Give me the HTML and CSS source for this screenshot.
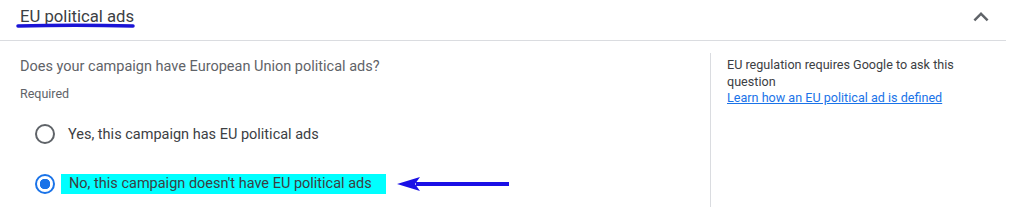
FILE: index.html
```html
<!DOCTYPE html>
<html lang="en">
<head>
    <meta charset="UTF-8">
    <title>EU political ads</title>
    <link rel="stylesheet" href="styles.css">
</head>
<body>
    <div class="panel">
        <div class="panel-header">
            <h2 class="panel-title">EU political ads</h2>
            <svg class="chevron" width="30" height="30" viewBox="0 0 24 24">
                <path d="M7.41 15.41 12 10.83l4.59 4.58L18 14l-6-6-6 6z" fill="#5f6368"/>
            </svg>
            <!-- annotation underline -->
            <svg class="mark-underline" width="122" height="8" viewBox="0 0 122 8">
                <path d="M3 4 C30 3.4 90 3.4 118 4" stroke="#1a14d6" stroke-width="3.5" stroke-linecap="round" fill="none"/>
            </svg>
        </div>

        <div class="panel-body">
            <div class="question">
                <p class="question-text">Does your campaign have European Union political ads?</p>
                <p class="required">Required</p>

                <div class="options">
                    <label class="option">
                        <span class="radio"></span>
                        <span class="option-label">Yes, this campaign has EU political ads</span>
                    </label>
                    <label class="option">
                        <span class="radio checked"></span>
                        <span class="option-label highlight">No, this campaign doesn't have EU political ads</span>
                        <!-- annotation arrow -->
                        <svg class="mark-arrow" width="120" height="16" viewBox="0 0 120 16">
                            <path d="M20 8 H113" stroke="#1a10e6" stroke-width="4" fill="none"/>
                            <path d="M1 8 L24 1 L19 8 L24 15 Z" fill="#1a10e6"/>
                        </svg>
                    </label>
                </div>
            </div>

            <div class="help">
                <p>EU regulation requires Google to ask this question</p>
                <a href="#">Learn how an EU political ad is defined</a>
            </div>
        </div>
    </div>
</body>
</html>
```

FILE: styles.css
```css
body {
    margin: 0;
    background: #fff;
    font-family: Roboto, "Liberation Sans", sans-serif;
    color: #3c4043;
}

.panel {
    width: 1006px;
}

.panel-header {
    position: relative;
    box-sizing: border-box;
    height: 41px;
    display: flex;
    align-items: center;
    justify-content: space-between;
    padding: 0 10px 6px 20px;
    border-bottom: 1px solid #dadce0;
}

.panel-title {
    margin: 0;
    font-size: 16.7px;
    font-weight: 400;
    color: #3c4043;
    line-height: 24px;
}

.chevron {
    display: block;
}

.mark-underline {
    position: absolute;
    left: 15px;
    top: 22px;
}

.panel-body {
    display: flex;
}

.question {
    width: 690px;
    padding: 16px 0 0 20px;
}

.question-text {
    margin: 0;
    font-size: 14.5px;
    line-height: 20px;
    color: #5f6368;
}

.required {
    margin: 9px 0 0;
    font-size: 12.5px;
    line-height: 16px;
    color: #5f6368;
}

.options {
    display: flex;
    flex-direction: column;
    gap: 30px;
    padding: 22px 0 8px 15px;
}

.option {
    position: relative;
    display: flex;
    align-items: center;
    height: 20px;
    font-size: 14.5px;
    color: #3c4043;
}

.radio {
    box-sizing: border-box;
    width: 20px;
    height: 20px;
    border: 2px solid #5f6368;
    border-radius: 50%;
    margin-right: 6px;
    flex: none;
}

.radio.checked {
    border-color: #1a73e8;
    background: radial-gradient(circle, #1a73e8 0 5px, transparent 5.5px);
}

.option-label {
    padding-left: 7px;
}

.option-label.highlight {
    background: #00ffff;
    padding: 0 14px 0 8px;
    line-height: 20px;
}

.mark-arrow {
    position: absolute;
    left: 361px;
    top: 2px;
}

.help {
    margin-top: 12px;
    border-left: 1px solid #dadce0;
    padding: 4px 0 0 16px;
    width: 245px;
    font-size: 12.6px;
    line-height: 16.5px;
    min-height: 150px;
}

.help p {
    margin: 0;
    color: #3c4043;
}

.help a {
    color: #1a73e8;
}
```
